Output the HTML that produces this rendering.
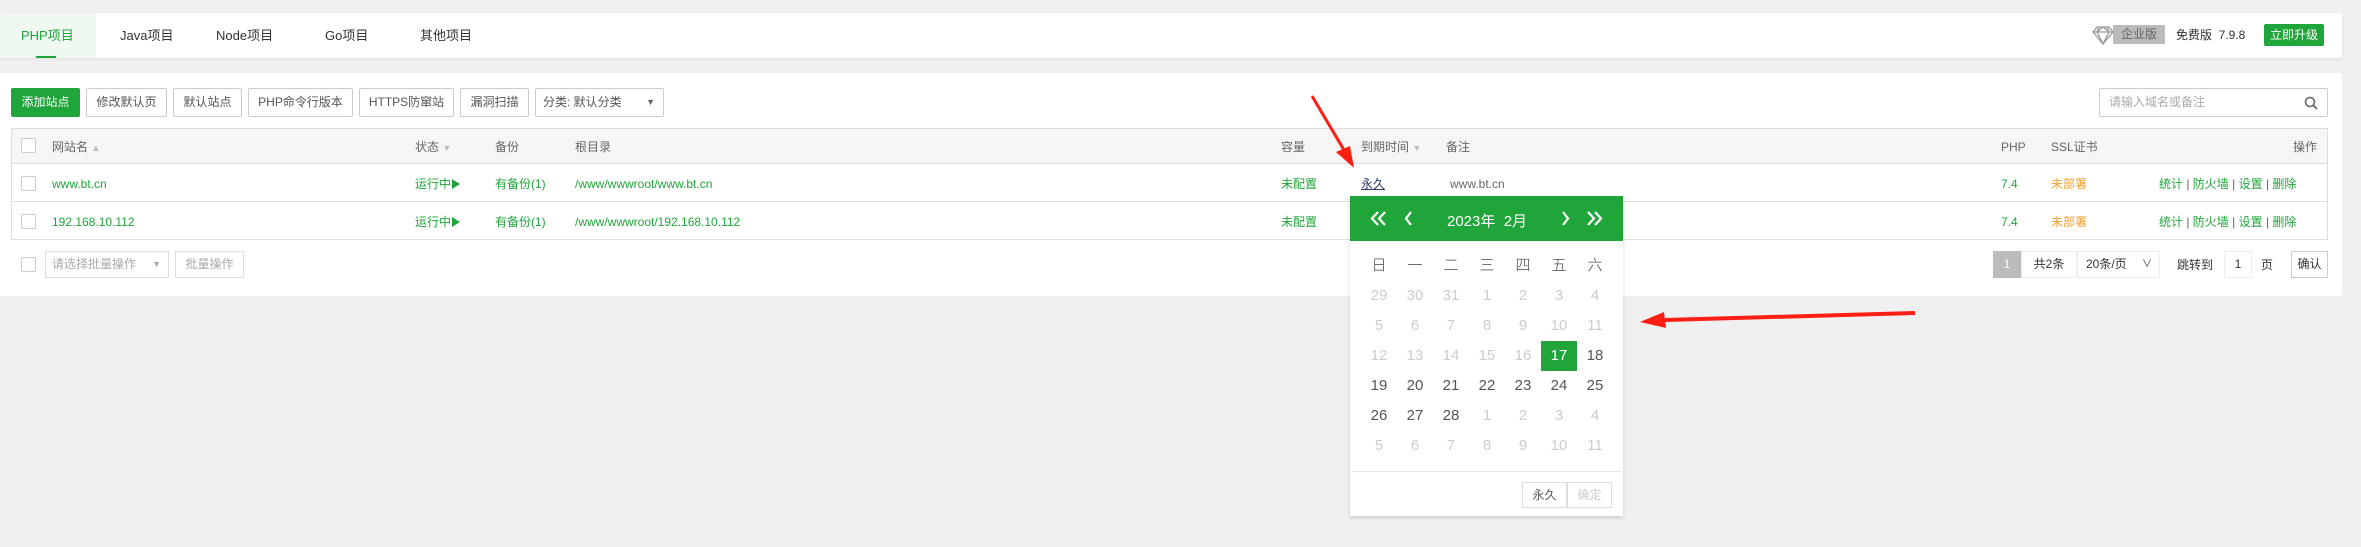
<!DOCTYPE html>
<html><head><meta charset="utf-8"><style>
*{margin:0;padding:0;box-sizing:border-box}
body{width:2361px;height:547px;background:#f0f0f0;font-family:"Liberation Sans","Noto Sans CJK SC",sans-serif;font-size:12px;color:#666;position:relative;overflow:hidden}
.a{position:absolute;white-space:nowrap;line-height:16px}
.g{color:#20a53a}
.btn{position:absolute;top:88px;height:29px;border:1px solid #ccc;border-radius:2px;background:#fff;color:#555;line-height:27px;text-align:center;font-size:12px}
.cb{position:absolute;width:15px;height:15px;border:1px solid #ccc;border-radius:2px;background:#fff}
.hl{position:absolute;left:11px;width:2317px;height:1px;background:#ddd}
.wd{position:absolute;width:36px;text-align:center;font-size:15px;line-height:20px}
.tri{display:inline-block;width:0;height:0;border-top:5px solid transparent;border-bottom:5px solid transparent;border-left:8px solid #20a53a;vertical-align:-1px;margin-left:1px}
</style></head><body>
<div class="a" style="left:0;top:13px;width:2342px;height:45px;background:#fff;box-shadow:0 1px 3px rgba(0,0,0,.08);border-radius:0 3px 3px 0"></div>
<div class="a" style="left:0;top:13px;width:96px;height:45px;background:#eff8f1"></div>
<div class="a" style="left:36px;top:56px;width:20px;height:2px;background:#20a53a"></div>
<div class="a g" style="left:21px;top:28px;font-size:13px">PHP项目</div>
<div class="a" style="left:120px;top:28px;font-size:13px;color:#333">Java项目</div>
<div class="a" style="left:216px;top:28px;font-size:13px;color:#333">Node项目</div>
<div class="a" style="left:325px;top:28px;font-size:13px;color:#333">Go项目</div>
<div class="a" style="left:420px;top:28px;font-size:13px;color:#333">其他项目</div>
<svg class="a" style="left:2092px;top:24px" width="22" height="22" viewBox="0 0 22 22"><path d="M5 3h12l4 5-10 12L1 8z M1 8h20 M7 3l-2 5 6 12 6-12-2-5 M5 8l6-5 6 5" fill="none" stroke="#999" stroke-width="1.3"/></svg>
<div class="a" style="left:2113px;top:25px;width:52px;height:19px;background:#bbb;color:#666;line-height:19px;text-align:center;font-size:12px">企业版</div>
<div class="a" style="left:2176px;top:27px;color:#333;font-size:12px">免费版 &nbsp;7.9.8</div>
<div class="a" style="left:2264px;top:24px;width:60px;height:22px;background:#20a53a;color:#fff;border-radius:2px;line-height:22px;text-align:center;font-size:12px">立即升级</div>
<div class="a" style="left:0;top:73px;width:2342px;height:223px;background:#fff;border-radius:0 3px 3px 0"></div>
<div class="btn" style="left:11px;width:69px;background:#20a53a;border-color:#20a53a;color:#fff">添加站点</div>
<div class="btn" style="left:86px;width:81px">修改默认页</div>
<div class="btn" style="left:173px;width:69px">默认站点</div>
<div class="btn" style="left:248px;width:105px">PHP命令行版本</div>
<div class="btn" style="left:359px;width:95px">HTTPS防窜站</div>
<div class="btn" style="left:460px;width:69px">漏洞扫描</div>
<div class="btn" style="left:535px;width:129px;text-align:left;padding-left:7px">分类: 默认分类<span style="position:absolute;right:8px;font-size:9px;color:#666">▼</span></div>
<div class="btn" style="left:2099px;width:229px;text-align:left;padding-left:9px;color:#aaa">请输入域名或备注
<svg style="position:absolute;right:9px;top:7px" width="14" height="14" viewBox="0 0 14 14"><circle cx="6" cy="6" r="4.5" fill="none" stroke="#666" stroke-width="1.6"/><path d="M9.3 9.3L13 13" stroke="#666" stroke-width="1.8"/></svg></div>
<div class="a" style="left:11px;top:128px;width:2317px;height:112px;border:1px solid #ddd"></div>
<div class="a" style="left:12px;top:129px;width:2315px;height:34px;background:#f6f6f6"></div>
<div class="hl" style="top:163px"></div><div class="hl" style="top:201px"></div>
<div class="cb" style="left:21px;top:138px"></div>
<div class="cb" style="left:21px;top:176px"></div>
<div class="cb" style="left:21px;top:214px"></div>
<div class="a" style="left:52px;top:139px">网站名 <span style="font-size:9px;color:#bbb">▲</span></div>
<div class="a" style="left:415px;top:139px">状态 <span style="font-size:9px;color:#bbb">▼</span></div>
<div class="a" style="left:495px;top:139px">备份</div>
<div class="a" style="left:575px;top:139px">根目录</div>
<div class="a" style="left:1281px;top:139px">容量</div>
<div class="a" style="left:1361px;top:139px">到期时间 <span style="font-size:9px;color:#bbb">▼</span></div>
<div class="a" style="left:1446px;top:139px">备注</div>
<div class="a" style="left:2001px;top:139px">PHP</div>
<div class="a" style="left:2051px;top:139px">SSL证书</div>
<div class="a" style="left:2293px;top:139px">操作</div>
<div class="a g" style="left:52px;top:176px">www.bt.cn</div>
<div class="a g" style="left:415px;top:176px">运行中<i class="tri"></i></div>
<div class="a g" style="left:495px;top:176px">有备份(1)</div>
<div class="a g" style="left:575px;top:176px">/www/wwwroot/www.bt.cn</div>
<div class="a g" style="left:1281px;top:176px">未配置</div>
<div class="a" style="left:1361px;top:176px;color:#2a3a6a;text-decoration:underline">永久</div>
<div class="a" style="left:1450px;top:176px;color:#666">www.bt.cn</div>
<div class="a g" style="left:2001px;top:176px">7.4</div>
<div class="a" style="left:2051px;top:176px;color:#f0a030">未部署</div>
<div class="a g" style="left:2159px;top:176px">统计 <span style="color:#666">|</span> 防火墙 <span style="color:#666">|</span> 设置 <span style="color:#666">|</span> 删除</div>
<div class="a g" style="left:52px;top:214px">192.168.10.112</div>
<div class="a g" style="left:415px;top:214px">运行中<i class="tri"></i></div>
<div class="a g" style="left:495px;top:214px">有备份(1)</div>
<div class="a g" style="left:575px;top:214px">/www/wwwroot/192.168.10.112</div>
<div class="a g" style="left:1281px;top:214px">未配置</div>
<div class="a g" style="left:2001px;top:214px">7.4</div>
<div class="a" style="left:2051px;top:214px;color:#f0a030">未部署</div>
<div class="a g" style="left:2159px;top:214px">统计 <span style="color:#666">|</span> 防火墙 <span style="color:#666">|</span> 设置 <span style="color:#666">|</span> 删除</div>
<div class="cb" style="left:21px;top:257px"></div>
<div class="a" style="left:45px;top:251px;width:124px;height:27px;border:1px solid #ddd;color:#aaa;line-height:25px;padding-left:6px">请选择批量操作<span style="position:absolute;right:7px;font-size:9px">▼</span></div>
<div class="a" style="left:175px;top:251px;width:69px;height:27px;border:1px solid #ddd;color:#aaa;line-height:25px;text-align:center">批量操作</div>
<div class="a" style="left:1993px;top:251px;width:28px;height:27px;background:#bbb;color:#fff;line-height:27px;text-align:center">1</div>
<div class="a" style="left:2021px;top:251px;width:56px;height:27px;border:1px solid #eee;color:#333;line-height:25px;text-align:center">共2条</div>
<div class="a" style="left:2077px;top:251px;width:83px;height:27px;border:1px solid #eee;color:#333;line-height:25px;padding-left:8px">20条/页<span style="position:absolute;right:7px;font-size:10px">∨</span></div>
<div class="a" style="left:2177px;top:257px;color:#333">跳转到</div>
<div class="a" style="left:2224px;top:251px;width:28px;height:27px;border:1px solid #eee;color:#333;line-height:25px;text-align:center">1</div>
<div class="a" style="left:2261px;top:257px;color:#333">页</div>
<div class="a" style="left:2291px;top:251px;width:37px;height:27px;border:1px solid #ccc;color:#333;line-height:25px;text-align:center">确认</div>
<div class="a" style="left:1350px;top:196px;width:273px;height:320px;background:#fff;box-shadow:0 2px 4px rgba(0,0,0,.15)"></div>
<div class="a" style="left:1350px;top:196px;width:273px;height:45px;background:#20a53a"></div>
<svg class="a" style="left:1350px;top:196px" width="273" height="45" viewBox="0 0 273 45">
<g fill="none" stroke="#fff" stroke-width="2.2">
<path d="M28 16l-6 6.5 6 6.5 M35 16l-6 6.5 6 6.5"/>
<path d="M61 16l-5 6.5 5 6.5"/>
<path d="M213 16l5 6.5-5 6.5"/>
<path d="M238 16l6 6.5-6 6.5 M245 16l6 6.5-6 6.5"/>
</g></svg>
<div class="a" style="left:1447px;top:213px;color:#fff;font-size:15px;line-height:18px">2023年 &nbsp;2月</div>
<div id="cal"></div>
<div class="a" style="left:1541px;top:341px;width:36px;height:30px;background:#20a53a"></div>
<div class="a" style="left:1351px;top:471px;width:271px;height:1px;background:#e6e6e6"></div>
<div class="a" style="left:1522px;top:482px;width:45px;height:26px;border:1px solid #ddd;color:#555;line-height:24px;text-align:center">永久</div>
<div class="a" style="left:1567px;top:482px;width:45px;height:26px;border:1px solid #ddd;color:#ccc;line-height:24px;text-align:center">确定</div>
<script>
var c=document.getElementById('cal'),h='',w='日一二三四五六';
var xs=[1361,1397,1433,1469,1505,1541,1577];
for(var i=0;i<7;i++)h+='<div class="a wd" style="left:'+xs[i]+'px;top:256px;color:#444;font-weight:300">'+w[i]+'</div>';
var d=[[29,30,31,1,2,3,4],[5,6,7,8,9,10,11],[12,13,14,15,16,17,18],[19,20,21,22,23,24,25],[26,27,28,1,2,3,4],[5,6,7,8,9,10,11]];
for(var r=0;r<6;r++)for(var i=0;i<7;i++){var n=r*7+i,col=(n>=20&&n<=30)?'#555':'#ccc';if(n==19)col='#fff';
h+='<div class="a wd" style="left:'+xs[i]+'px;top:'+(286+r*30)+'px;color:'+col+';z-index:2">'+d[r][i]+'</div>';}
c.innerHTML=h;
</script>
<svg class="a" style="left:0;top:0" width="2361" height="547">
<path d="M1312 96 L1344 150" stroke="#ff1e12" stroke-width="3"/>
<path d="M1354 168 L1336 152 L1350 146 Z" fill="#ff1e12"/>
<path d="M1915 313 L1665 320" stroke="#ff1e12" stroke-width="4"/>
<path d="M1640 322 L1664 312 L1666 328 Z" fill="#ff1e12"/>
</svg>
</body></html>
